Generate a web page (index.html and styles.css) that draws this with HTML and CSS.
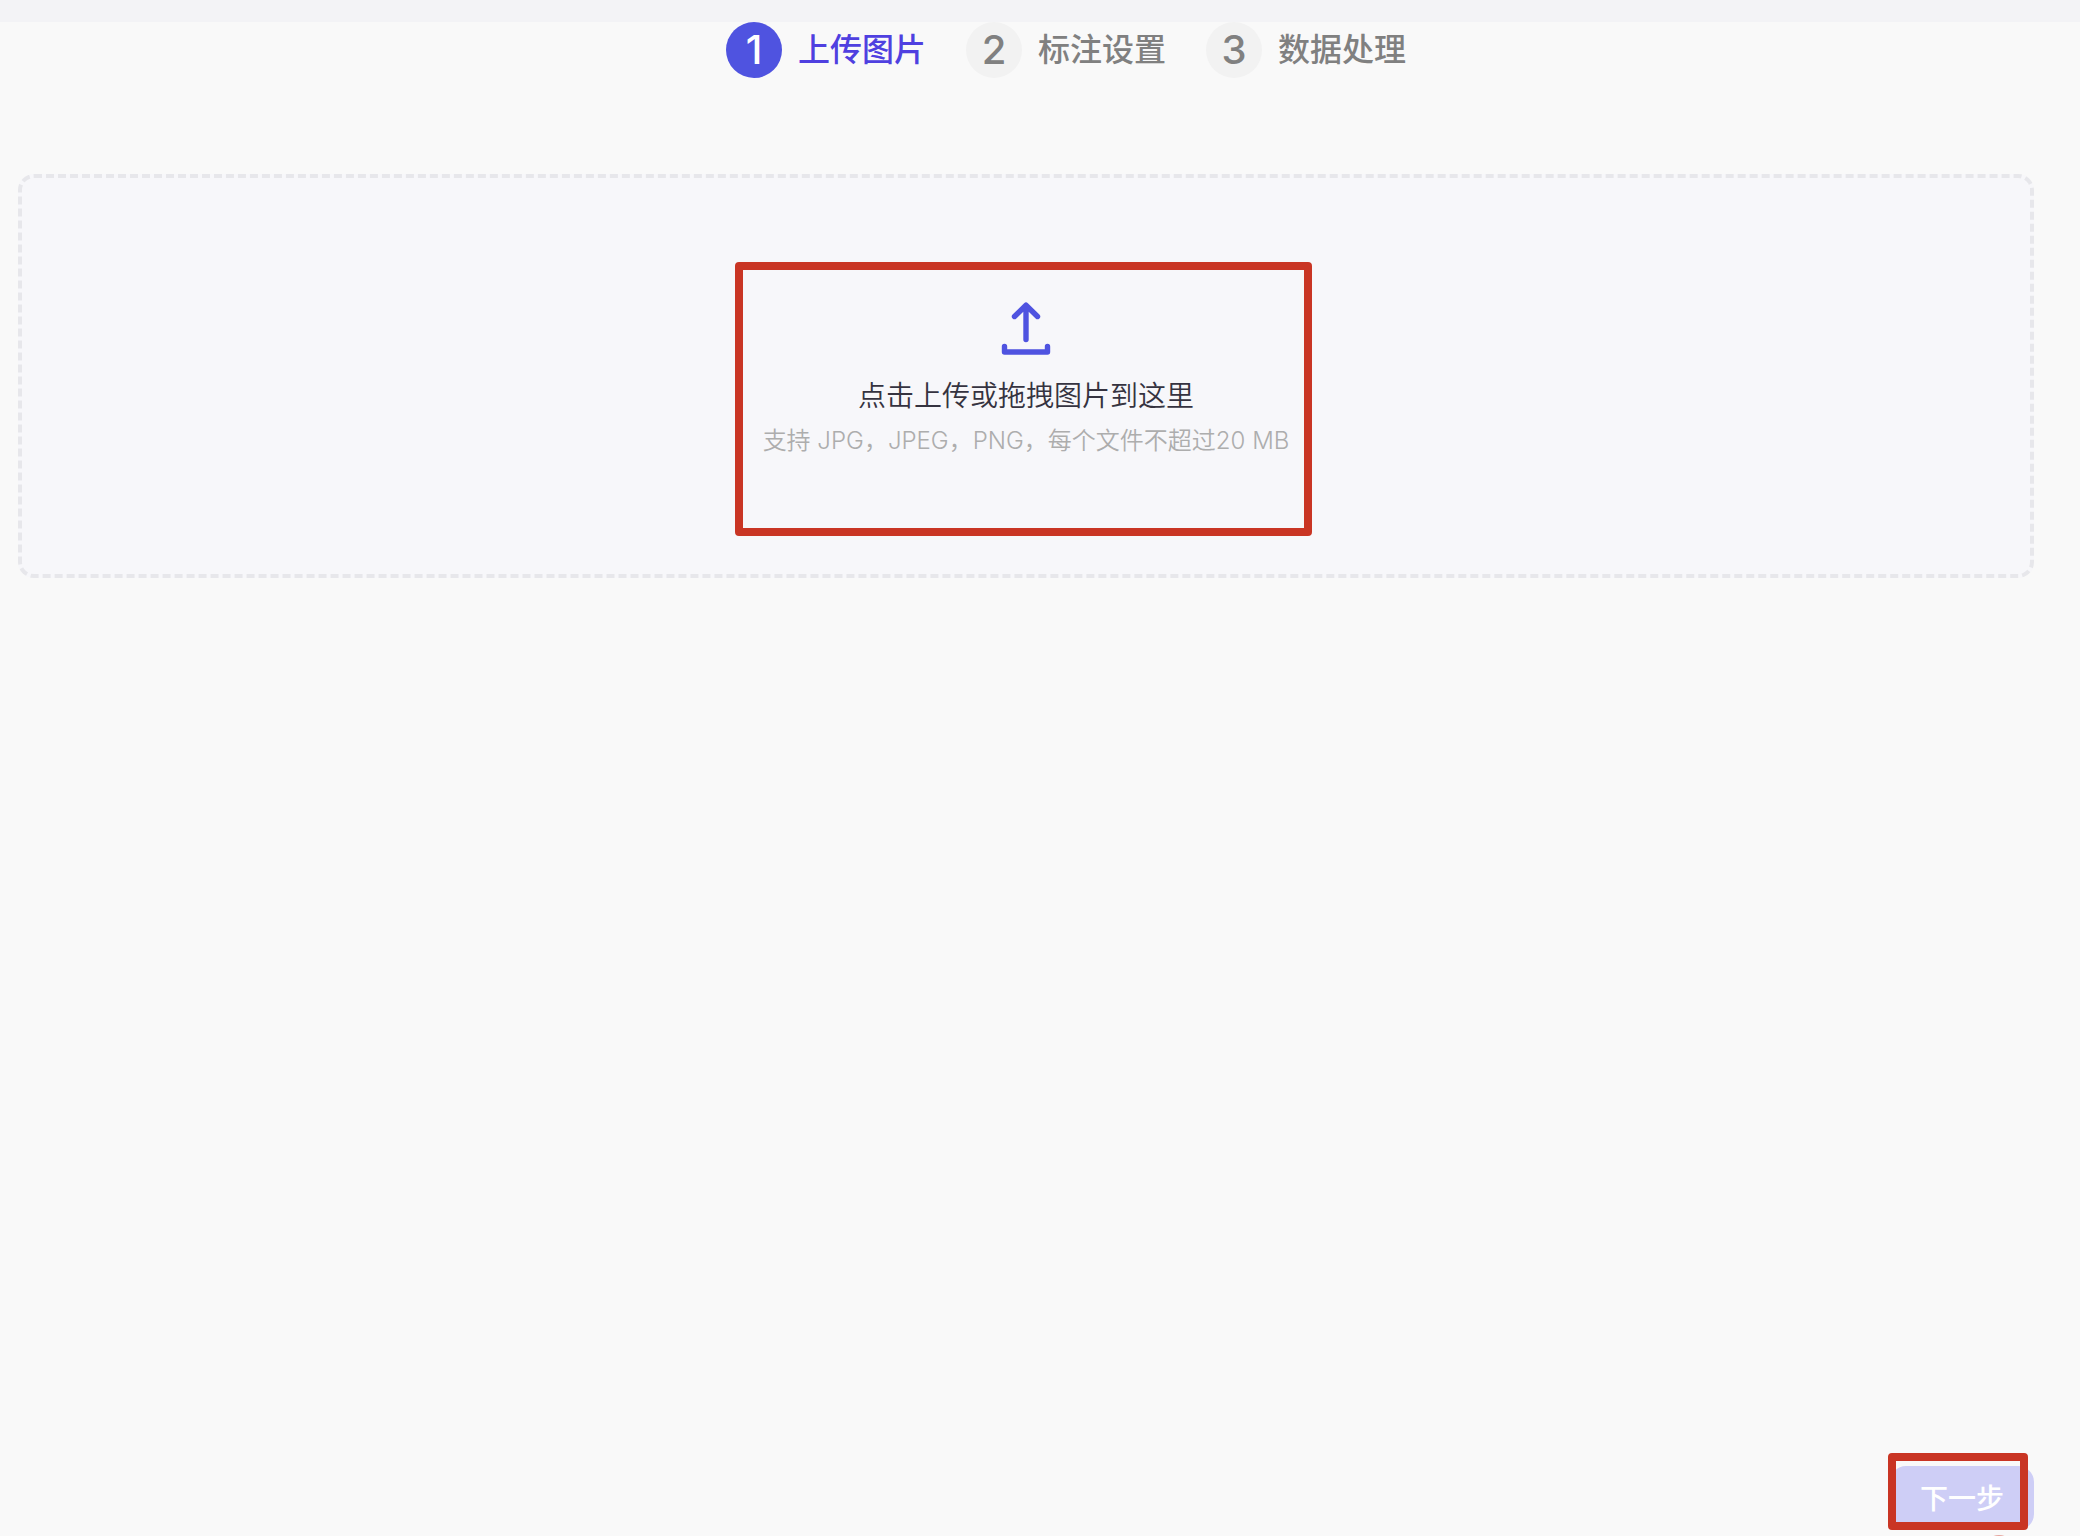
FILE: index.html
```html
<!DOCTYPE html>
<html lang="zh-CN">
<head>
<meta charset="utf-8">
<meta name="viewport" content="width=device-width, initial-scale=1">
<title>上传图片</title>
<link rel="stylesheet" href="styles.css">
</head>
<body>
<div class="topbar"></div>
<main class="page">
  <ol class="steps">
    <li class="step step-active" aria-current="step"><span class="step-number">1</span><span class="step-label">上传图片</span></li>
    <li class="step"><span class="step-number">2</span><span class="step-label">标注设置</span></li>
    <li class="step"><span class="step-number">3</span><span class="step-label">数据处理</span></li>
  </ol>
  <button type="button" class="dropzone">
    <svg class="upload-icon" viewBox="0 0 56 56" aria-hidden="true">
      <path d="M28 37.5V3.5M16.5 14.5L28 3.2L39.5 14.5M6.5 44.5V50H49.5V44.5"/>
    </svg>
    <span class="drop-title">点击上传或拖拽图片到这里</span>
    <span class="drop-hint">支持 JPG，JPEG，PNG，每个文件不超过20 MB</span>
    <span class="mark mark-drop"></span>
  </button>
  <footer class="actions">
    <div class="next-wrap">
      <button type="button" class="next" disabled>下一步</button>
      <span class="mark mark-next"></span>
      <span class="mark-dot"></span>
    </div>
  </footer>
</main>
</body>
</html>
```
FILE: styles.css
```css
* {
  box-sizing: border-box;
}

body {
  margin: 0;
  height: 100vh;
  display: flex;
  flex-direction: column;
  overflow: hidden;
  background: #f9f9f9;
  font-family: Inter, "Noto Sans CJK SC", sans-serif;
}

.topbar {
  flex: none;
  height: 22px;
  background: #f3f3f6;
}

.page {
  flex: 1;
  display: flex;
  flex-direction: column;
  padding: 0 46px 6px 18px;
}

.steps {
  display: flex;
  justify-content: center;
  gap: 40px;
  margin: 0 0 96px;
  padding: 0 0 0 80px;
  list-style: none;
}

.step {
  display: flex;
  align-items: center;
  gap: 16px;
  color: #808080;
  font-weight: 500;
}

.step-number {
  width: 56px;
  height: 56px;
  border-radius: 50%;
  background: #f2f2f2;
  font-size: 40px;
  font-weight: 450;
  line-height: 56px;
  text-align: center;
}

.step-label {
  font-size: 32px;
  line-height: 56px;
}

.step-active {
  color: #4f40e0;
}

.step-active .step-number {
  background: #4f53e0;
  color: #fff;
}

.dropzone {
  position: relative;
  display: flex;
  flex-direction: column;
  align-items: center;
  height: 404px;
  padding: 124px 0 0;
  border: 4px dashed #e7e7eb;
  border-radius: 16px;
  background: #f7f7fa;
  font-family: inherit;
  font-weight: 350;
}

.upload-icon {
  width: 56px;
  height: 56px;
  margin-bottom: 16px;
  fill: none;
  stroke: #4f53e0;
  stroke-width: 5.4;
  stroke-linecap: round;
  stroke-linejoin: round;
}

.drop-title {
  font-size: 28px;
  line-height: 44px;
  color: #353340;
}

.drop-hint {
  font-size: 24px;
  line-height: 46px;
  color: #adadad;
}

.mark {
  position: absolute;
  border: 8px solid #c93524;
  border-radius: 4px;
}

.mark-drop {
  top: 84px;
  left: 50%;
  width: 577px;
  height: 274px;
  margin-left: -291px;
}

.actions {
  display: flex;
  justify-content: flex-end;
  margin-top: auto;
}

.next-wrap {
  position: relative;
}

.next {
  display: block;
  width: 144px;
  height: 64px;
  padding: 0 0 2px;
  border: 0;
  border-radius: 16px;
  background: #cecef6;
  color: #fff;
  font-family: inherit;
  font-size: 28px;
  font-weight: 500;
}

.mark-next {
  top: -13px;
  right: 6px;
  width: 140px;
  height: 77px;
}

.mark-dot {
  position: absolute;
  top: 69px;
  right: 20px;
  width: 30px;
  height: 30px;
  border-radius: 50%;
  background: #e5a59d;
}
```
